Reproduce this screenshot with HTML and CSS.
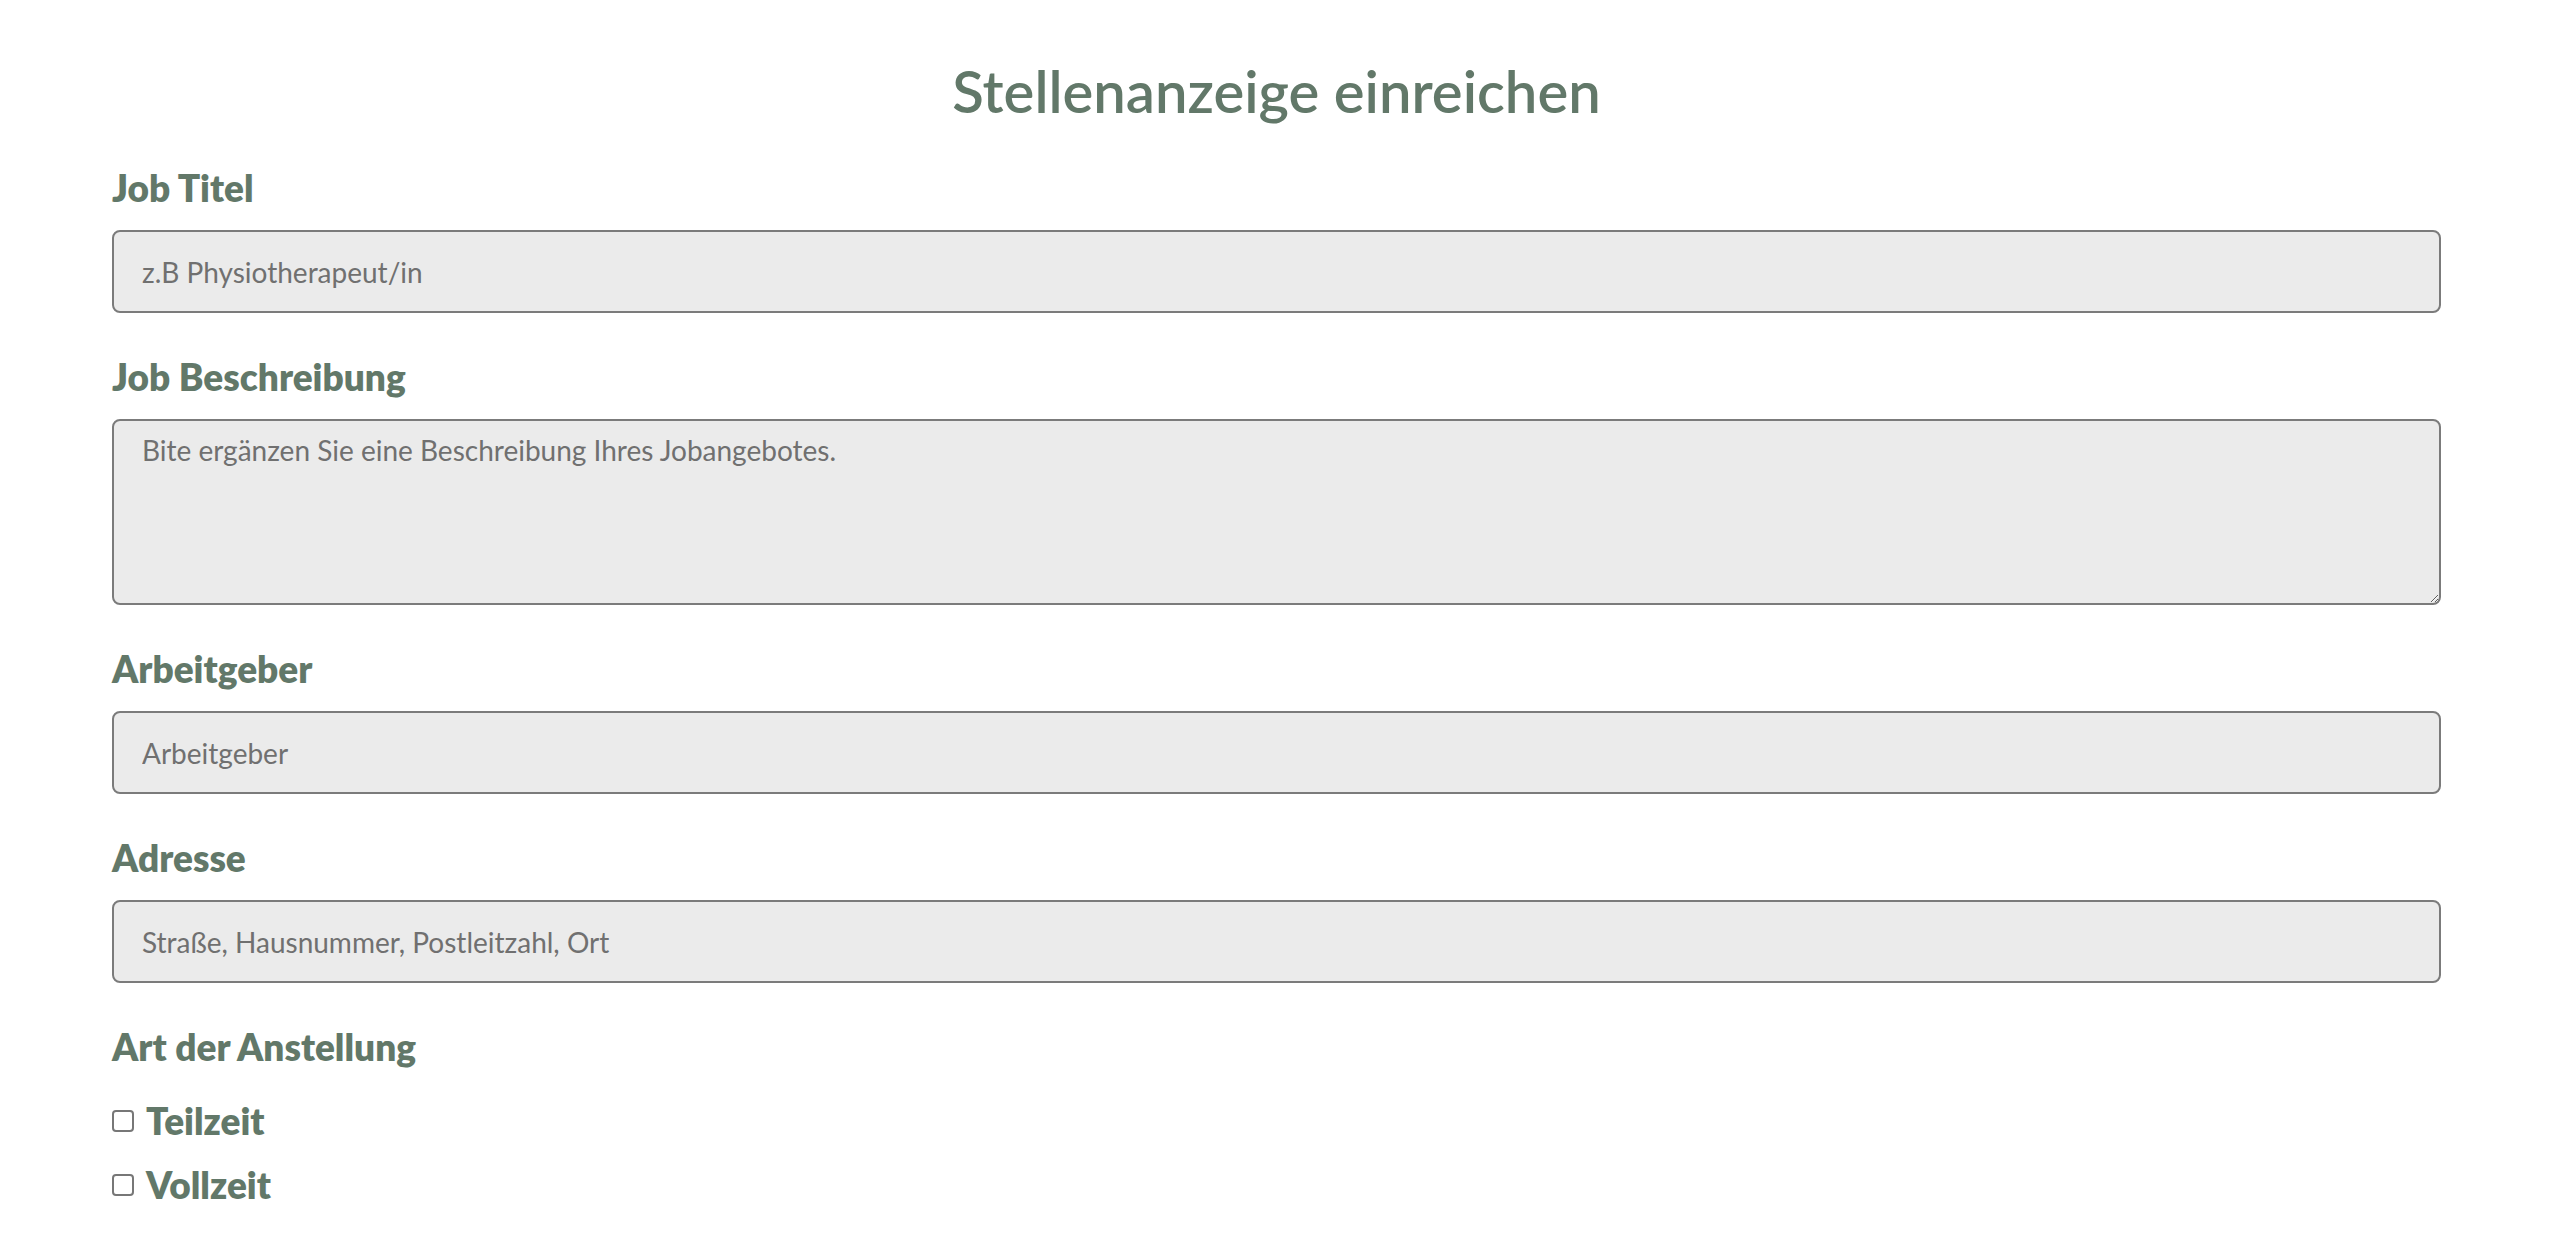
FILE: index.html
```html
<!DOCTYPE html>
<html lang="de">
<head>
  <meta charset="UTF-8">
  <title>Stellenanzeige einreichen</title>
  <link rel="stylesheet" href="styles.css">
</head>
<body>

  <form id="jobForm" class="job-form">
    <h1>Stellenanzeige einreichen</h1>

    <div class="field">
      <label for="job_title">Job Titel</label>
      <input type="text" id="job_title" name="job_title" placeholder="z.B Physiotherapeut/in">
    </div>

    <div class="field">
      <label for="job_description">Job Beschreibung</label>
      <textarea id="job_description" name="job_description" placeholder="Bite ergänzen Sie eine Beschreibung Ihres Jobangebotes."></textarea>
    </div>

    <div class="field">
      <label for="employer">Arbeitgeber</label>
      <input type="text" id="employer" name="employer" placeholder="Arbeitgeber">
    </div>

    <div class="field">
      <label for="address">Adresse</label>
      <input type="text" id="address" name="address" placeholder="Straße, Hausnummer, Postleitzahl, Ort">
    </div>

    <div class="field">
      <span class="group-title">Art der Anstellung</span>
      <div class="checks">
        <label class="check"><input type="checkbox" name="type" value="teilzeit"> Teilzeit</label>
        <label class="check"><input type="checkbox" name="type" value="vollzeit"> Vollzeit</label>
      </div>
    </div>
  </form>

</body>
</html>
```

FILE: styles.css
```css
body {
  margin: 0;
  background-color: #fff;
  font-family: Lato, 'Open Sans', sans-serif;
  color: #627869;
}
.job-form {
  margin: 0 119px 0 112px;
  padding: 58px 0 40px;
}
h1 {
  margin: 0;
  text-align: center;
  font-size: 58px;
  line-height: 66px;
  font-weight: 600;
  color: #627869;
}
.field {
  margin-top: 42px;
}
.field label,
.group-title {
  display: block;
  font-size: 37px;
  line-height: 44px;
  font-weight: 800;
  margin-bottom: 20px;
}
input[type="text"],
textarea {
  display: block;
  width: 100%;
  box-sizing: border-box;
  margin: 0;
  background-color: #ebebeb;
  border: 2px solid #7b7b7b;
  border-radius: 8px;
  font-family: Lato, 'Open Sans', sans-serif;
  font-size: 28px;
  color: #555;
  outline: none;
}
input[type="text"] {
  height: 83px;
  padding: 0 28px;
}
textarea {
  height: 186px;
  padding: 12px 28px;
  resize: vertical;
}
input::placeholder,
textarea::placeholder {
  color: #707070;
}
.checks {
  display: flex;
  flex-direction: column;
  gap: 20px;
  margin-top: 30px;
}
.group-title {
  margin-bottom: 0;
}
.field .check {
  display: flex;
  align-items: center;
  gap: 12px;
  margin: 0;
}
.check input {
  appearance: none;
  width: 22px;
  height: 22px;
  margin: 0;
  border: 2px solid #777;
  border-radius: 4px;
  background: #fff;
}
```
